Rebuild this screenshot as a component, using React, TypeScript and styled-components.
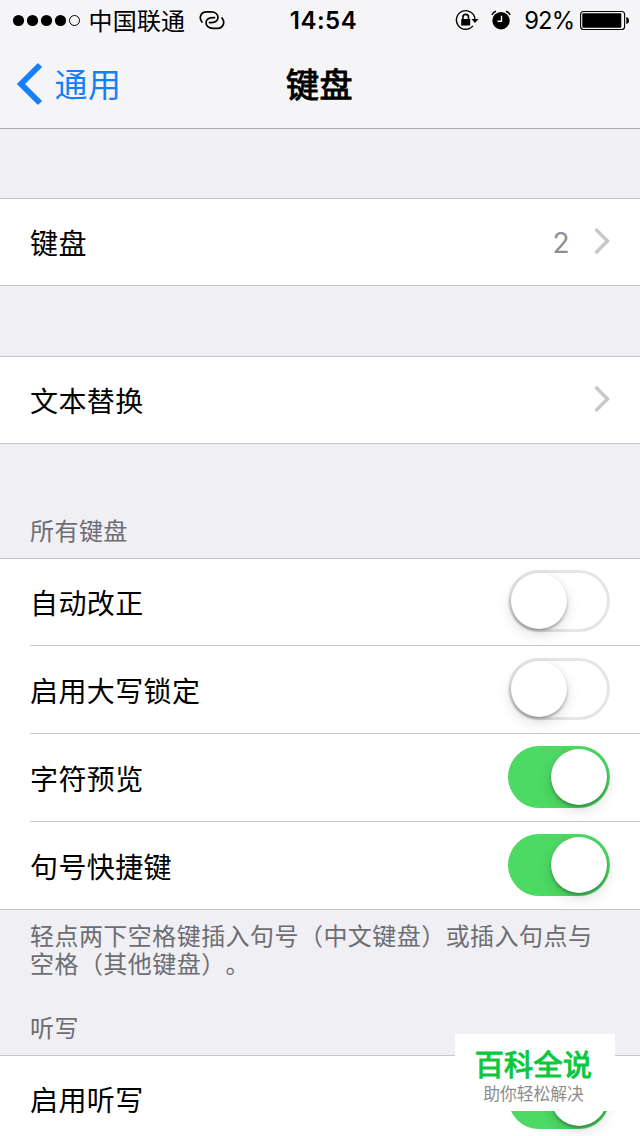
import React from "react";
import styled, { createGlobalStyle } from "styled-components";

const sans = `"Inter", "Noto Sans CJK SC", sans-serif`;

const Global = createGlobalStyle`
  * { box-sizing: border-box; }
  html, body { margin: 0; padding: 0; background: #efeff4; }
  body { font-family: ${sans}; color: #000; overflow: hidden; text-spacing-trim: space-all; }
`;

const Screen = styled.div`
  width: 640px;
  height: 1136px;
  overflow: hidden;
  position: relative;
  background: #efeff4;
`;

const TopArea = styled.header`
  height: 129px;
  background: #f5f5f7;
  border-bottom: 1px solid #a9a9b1;
`;

const StatusBar = styled.div`
  display: grid;
  grid-template-columns: 1fr auto 1fr;
  align-items: center;
  height: 40px;
  padding: 0 11px 0 12px;
  font-size: 24px;
  line-height: 40px;
`;

const StatusLeft = styled.div`
  display: flex;
  align-items: center;
`;

const StatusRight = styled(StatusLeft)`
  justify-content: flex-end;
`;

const Carrier = styled.span`
  margin: 0 14px 0 6.5px;
  padding-top: 3px;
  letter-spacing: 0.2px;
  line-height: 37px;
`;

const Clock = styled.span`
  padding: 2px 0 0 6px;
  font-weight: 600;
  line-height: 38px;
  letter-spacing: 0.5px;
`;

const Percent = styled.span`
  margin: 0 6px 0 13px;
  padding-top: 2px;
  line-height: 38px;
  font-size: 23.8px;
  letter-spacing: -1px;
`;

const NavBar = styled.nav`
  display: grid;
  grid-template-columns: 1fr auto 1fr;
  align-items: center;
  height: 88px;
  padding: 0 16px;
  font-size: 33px;
`;

const Back = styled.a`
  display: flex;
  align-items: center;
  gap: 11.5px;
  color: #157efb;
`;

const BackLabel = styled.span`
  padding-top: 2px;
  line-height: 86px;
  letter-spacing: 0.5px;
`;

const Title = styled.h1`
  margin: 0 1px 0 0;
  padding-top: 2px;
  font-size: 33px;
  font-weight: 400;
  line-height: 86px;
  letter-spacing: 0.5px;
  -webkit-text-stroke: 1px #000;
`;

const Group = styled.section<{ $gap?: number }>`
  margin-top: ${(p) => p.$gap ?? 0}px;
  background: #fff;
  border-top: 1px solid #c8c7cc;
  border-bottom: 1px solid #c8c7cc;
`;

const Label = styled.span`
  line-height: 40px;
  padding-top: 5px;
`;

const Row = styled.div`
  display: flex;
  align-items: center;
  justify-content: space-between;
  height: 88px;
  margin-left: 30px;
  padding: 0 30px 2px 0;
  font-size: 28px;
  letter-spacing: 0.4px;
  border-bottom: 1px solid #c8c7cc;
  & > ${Label} { padding-top: 6px; }
  &:first-child { height: 87px; }
  &:first-child > ${Label} { padding-top: 5px; }
  &:last-child { height: 87px; border-bottom: 0; }
  &:only-child { height: 86px; }
`;

const Detail = styled.span`
  display: flex;
  align-items: center;
  gap: 24px;
  color: #8e8e93;
`;

const Value = styled.span`
  line-height: 40px;
  padding-top: 3px;
`;

const Caption = styled.h2<{ $height: number }>`
  display: flex;
  align-items: flex-end;
  height: ${(p) => p.$height}px;
  margin: 0;
  padding: 0 30px 12px;
  font-size: 24px;
  font-weight: 400;
  line-height: 28px;
  letter-spacing: 0.45px;
  color: #6d6d72;
`;

const Footnote = styled.p`
  margin: 0;
  padding: 13px 30px 0;
  height: 69px;
  font-size: 24px;
  line-height: 28px;
  letter-spacing: 0.45px;
  color: #6d6d72;
`;

const Track = styled.span<{ $on: boolean }>`
  display: flex;
  justify-content: ${(p) => (p.$on ? "flex-end" : "flex-start")};
  width: 102px;
  height: 62px;
  padding: 3px;
  border-radius: 31px;
  background: ${(p) => (p.$on ? "#4cd964" : "#fff")};
  box-shadow: ${(p) => (p.$on ? "none" : "inset 0 0 0 3px #e5e5e5")};
`;

const Knob = styled.span`
  width: 56px;
  height: 56px;
  border-radius: 50%;
  background: #fff;
  box-shadow: 0 2px 3px rgba(0, 0, 0, 0.3), 0 5px 14px rgba(0, 0, 0, 0.14);
`;

const Watermark = styled.aside`
  position: absolute;
  left: 455px;
  top: 1034px;
  width: 160px;
  height: 77px;
  display: flex;
  flex-direction: column;
  align-items: center;
  background: #fff;
`;

const WatermarkName = styled.strong`
  margin: 14px 3px 0 0;
  font-size: 29px;
  line-height: 36px;
  font-weight: 400;
  letter-spacing: 0.4px;
  color: #0bc83c;
  -webkit-text-stroke: 1.1px #0bc83c;
`;

const WatermarkTag = styled.span`
  margin-right: 3px;
  font-size: 16.8px;
  line-height: 20px;
  color: #8c8c8c;
`;

const Signal = () => (
  <svg width="70" height="14" viewBox="0 0 70 14">
    {[6.5, 20.5, 34.5, 48.5].map((x) => (
      <circle key={x} cx={x} cy="7.5" r="5.6" />
    ))}
    <circle cx="62.5" cy="7.5" r="5" fill="none" stroke="#000" strokeWidth="1" />
  </svg>
);

const Hotspot = () => (
  <svg width="26" height="22" viewBox="0 0 26 22" fill="none" stroke="#000" strokeWidth="1.7" strokeLinecap="round">
    <path d="M3 13C-0.300 9 1.500 2.900 7.500 2.900H12C16.500 2.900 19 5.500 19 8.500C19 12 16 13.800 10.500 13.600" />
    <path d="M23 9C26.300 13 24.500 19.300 18.500 19.300H14C9.500 19.300 7 16.700 7 13.700C7 10.200 10 8.400 15.500 8.600" />
  </svg>
);

const RotationLock = () => (
  <svg width="24" height="22" viewBox="0 0 24 22">
    <path d="M17.900 16.900A9.300 9.300 0 1 1 20 10.500" fill="none" stroke="#000" strokeWidth="1.400" />
    <path d="M16.500 10H23.500L20 14Z" />
    <rect x="6.200" y="10" width="9" height="6.500" rx="0.600" />
    <path d="M7.900 10.500V8.200a2.800 2.800 0 0 1 5.600 0V10.500" fill="none" stroke="#000" strokeWidth="1.600" />
  </svg>
);

const AlarmSvg = styled.svg`
  margin-left: 12px;
`;

const Alarm = () => (
  <AlarmSvg width="20" height="20" viewBox="0 0 20 20">
    <circle cx="10" cy="10.700" r="8.700" />
    <path d="M10.500 5.800V11.200H6.500" fill="none" stroke="#f5f5f7" strokeWidth="1.400" />
    <path d="M0.900 5Q2 2 5 1.200M19.100 5Q18 2 15 1.200" fill="none" stroke="#000" strokeWidth="1.400" />
  </AlarmSvg>
);

const Battery = () => (
  <svg width="49" height="20" viewBox="0 0 49 20">
    <rect x="0.600" y="1.500" width="44" height="18" rx="3" fill="none" stroke="#000" strokeWidth="1.100" />
    <rect x="2.300" y="3.200" width="39" height="14.500" rx="1" />
    <path d="M46.300 7Q49 7.500 49 10.500Q49 13.500 46.300 14Z" />
  </svg>
);

const BackArrow = () => (
  <svg width="27" height="44" viewBox="0 0 27 44" fill="none" stroke="#157efb" strokeWidth="5.800">
    <path d="M24 3L5 22L24 41" />
  </svg>
);

const Chevron = () => (
  <svg width="16" height="28" viewBox="0 0 16 28" fill="none" stroke="#c7c7cc" strokeWidth="3.500">
    <path d="M1.500 2L13.500 14L1.500 26" />
  </svg>
);

const Switch = ({ on }: { on: boolean }) => (
  <Track role="switch" aria-checked={on} $on={on}>
    <Knob />
  </Track>
);

const toggles = [
  { label: "自动改正", on: false },
  { label: "启用大写锁定", on: false },
  { label: "字符预览", on: true },
  { label: "句号快捷键", on: true },
];

export default function App() {
  return (
    <Screen>
      <Global />
      <TopArea>
        <StatusBar>
          <StatusLeft>
            <Signal />
            <Carrier>中国联通</Carrier>
            <Hotspot />
          </StatusLeft>
          <Clock>14:54</Clock>
          <StatusRight>
            <RotationLock />
            <Alarm />
            <Percent>92%</Percent>
            <Battery />
          </StatusRight>
        </StatusBar>
        <NavBar>
          <Back>
            <BackArrow />
            <BackLabel>通用</BackLabel>
          </Back>
          <Title>键盘</Title>
        </NavBar>
      </TopArea>
      <Group $gap={69}>
        <Row>
          <Label>键盘</Label>
          <Detail>
            <Value>2</Value>
            <Chevron />
          </Detail>
        </Row>
      </Group>
      <Group $gap={70}>
        <Row>
          <Label>文本替换</Label>
          <Chevron />
        </Row>
      </Group>
      <Caption $height={114}>所有键盘</Caption>
      <Group>
        {toggles.map((t) => (
          <Row key={t.label}>
            <Label>{t.label}</Label>
            <Switch on={t.on} />
          </Row>
        ))}
      </Group>
      <Footnote>轻点两下空格键插入句号（中文键盘）或插入句点与空格（其他键盘）。</Footnote>
      <Caption $height={76}>听写</Caption>
      <Group>
        <Row>
          <Label>启用听写</Label>
          <Switch on />
        </Row>
      </Group>
      <Watermark>
        <WatermarkName>百科全说</WatermarkName>
        <WatermarkTag>助你轻松解决</WatermarkTag>
      </Watermark>
    </Screen>
  );
}
